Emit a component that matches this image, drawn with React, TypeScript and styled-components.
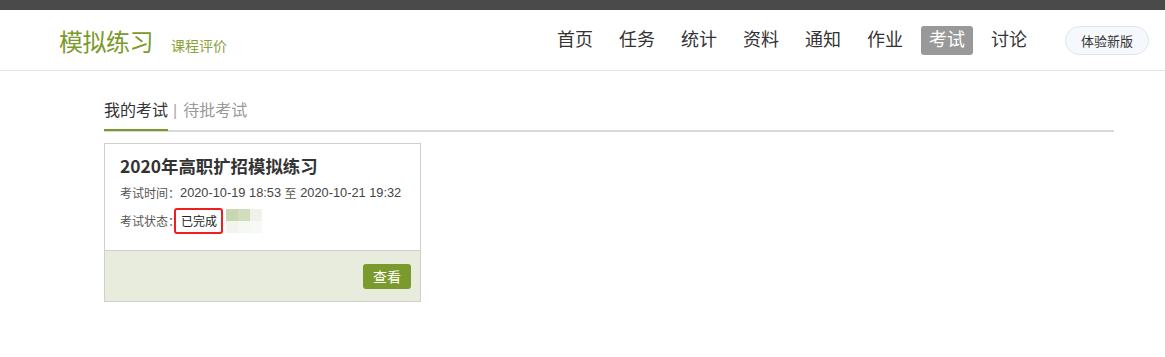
import styled, { createGlobalStyle } from "styled-components";

const GlobalStyle = createGlobalStyle`
  html, body {
    margin: 0;
    padding: 0;
    background: #fff;
    font-family: "Liberation Sans", "Noto Sans CJK SC", sans-serif;
    color: #333;
  }
`;

const TopBar = styled.div`
  height: 10px;
  background: #4a4a4a;
`;

const Header = styled.header`
  height: 60px;
  border-bottom: 1px solid #e3e3e3;
  display: flex;
  align-items: center;
  justify-content: space-between;
  padding: 0 16px 0 59px;
`;

const Brand = styled.div`
  display: flex;
  align-items: baseline;
  gap: 18px;
`;

const Logo = styled.span`
  font-size: 24px;
  color: #7a9a2b;
  letter-spacing: -0.5px;
`;

const SubLink = styled.span`
  font-size: 14px;
  color: #8aa33a;
`;

const Nav = styled.nav`
  display: flex;
  align-items: center;
`;

const NavList = styled.ul`
  display: flex;
  gap: 10px;
  margin: 0 30px 0 0;
  padding: 0;
  list-style: none;
`;

const NavItem = styled.li<{ $active?: boolean }>`
  height: 29px;
  line-height: 29px;
  padding: 0 8px;
  font-size: 18px;
  border-radius: 3px;
  color: ${(p) => (p.$active ? "#fff" : "#333")};
  background: ${(p) => (p.$active ? "#999" : "transparent")};
`;

const NewButton = styled.button`
  width: 84px;
  height: 29px;
  border: 1px solid #dfe5ef;
  border-radius: 15px;
  background: #f5f8fc;
  font-family: inherit;
  font-size: 13px;
  color: #333;
  padding: 0;
`;

const Main = styled.main`
  width: 1010px;
  padding: 28px 0 0 104px;
`;

const Tabs = styled.div`
  display: flex;
  align-items: center;
  border-bottom: 2px solid #d8d8d8;
  height: 31px;
`;

const Tab = styled.span<{ $active?: boolean }>`
  font-size: 16px;
  height: 29px;
  line-height: 22px;
  color: ${(p) => (p.$active ? "#333" : "#999")};
  border-bottom: 2px solid ${(p) => (p.$active ? "#7a9a2b" : "transparent")};
  margin-bottom: -2px;
`;

const Divider = styled.span`
  font-size: 16px;
  color: #aaa;
  margin: 0 6px 0 5px;
  height: 29px;
  line-height: 22px;
`;

const Card = styled.div`
  margin-top: 11px;
  width: 315px;
  border: 1px solid #cfcfcf;
  font-family: "Noto Sans CJK SC", "Liberation Sans", sans-serif;
`;

const CardBody = styled.div`
  height: 107px;
  padding: 0 15px;
  border-bottom: 1px solid #cfcfcf;
  box-sizing: border-box;
`;

const Title = styled.h3`
  margin: 0;
  padding-top: 10px;
  font-size: 17.4px;
  font-weight: bold;
  color: #333;
  line-height: 24px;
`;

const Info = styled.div`
  font-size: 12px;
  color: #555;
  line-height: 16px;
  margin-top: 7px;
  display: flex;
  align-items: center;
  white-space: pre;
`;

const DateText = styled.span`
  font-family: "Liberation Sans", sans-serif;
  font-size: 12.8px;
  color: #444;
`;

const StatusInfo = styled(Info)`
  margin-top: 7px;
`;

const Highlight = styled.span`
  display: inline-block;
  border: 2px solid #f01e1e;
  border-radius: 3px;
  padding: 3px 4px 3px 5px;
  margin-left: -6px;
  color: #222;
`;

const Mosaic = styled.div`
  display: grid;
  grid-template-columns: repeat(3, 12px);
  grid-template-rows: repeat(2, 12px);
  margin-left: 3px;
`;

const Pixel = styled.span<{ $c: string }>`
  background: ${(p) => p.$c};
`;

const CardFooter = styled.div`
  height: 50px;
  background: #e8ecdc;
  display: flex;
  align-items: center;
  justify-content: flex-end;
  padding-right: 9px;
`;

const ViewButton = styled.button`
  width: 48px;
  height: 25px;
  border: none;
  border-radius: 3px;
  background: #7a9a2e;
  color: #fff;
  font-family: inherit;
  font-size: 14px;
  padding: 0;
`;

const navItems = ["首页", "任务", "统计", "资料", "通知", "作业", "考试", "讨论"];
const mosaic = ["#c6d7b1", "#d0ddbf", "#eef2e9", "#f1f5ee", "#f6f8f3", "#f7f9f5"];

export default function App() {
  return (
    <>
      <GlobalStyle />
      <TopBar />
      <Header>
        <Brand>
          <Logo>模拟练习</Logo>
          <SubLink>课程评价</SubLink>
        </Brand>
        <Nav>
          <NavList>
            {navItems.map((n) => (
              <NavItem key={n} $active={n === "考试"}>
                {n}
              </NavItem>
            ))}
          </NavList>
          <NewButton>体验新版</NewButton>
        </Nav>
      </Header>
      <Main>
        <Tabs>
          <Tab $active>我的考试</Tab>
          <Divider>|</Divider>
          <Tab>待批考试</Tab>
        </Tabs>
        <Card>
          <CardBody>
            <Title>2020年高职扩招模拟练习</Title>
            <Info>
              考试时间：<DateText>2020-10-19 18:53 </DateText>至
              <DateText> 2020-10-21 19:32</DateText>
            </Info>
            <StatusInfo>
              考试状态：<Highlight>已完成</Highlight>
              <Mosaic>
                {mosaic.map((c, i) => (
                  <Pixel key={i} $c={c} />
                ))}
              </Mosaic>
            </StatusInfo>
          </CardBody>
          <CardFooter>
            <ViewButton>查看</ViewButton>
          </CardFooter>
        </Card>
      </Main>
    </>
  );
}
